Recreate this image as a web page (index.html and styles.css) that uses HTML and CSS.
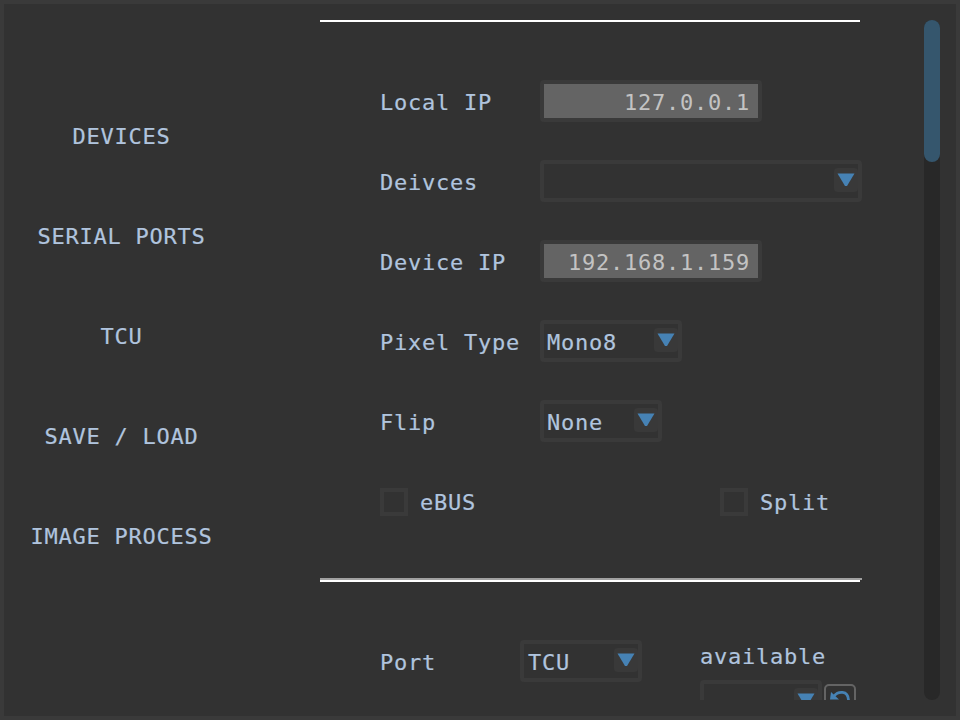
FILE: index.html
```
<!DOCTYPE html>
<html lang="en">
<head>
<meta charset="utf-8">
<title>Preferences</title>
<link rel="stylesheet" href="styles.css">
</head>
<body>
<div class="window">
  <nav class="sidebar">
    <a>DEVICES</a>
    <a>SERIAL PORTS</a>
    <a>TCU</a>
    <a>SAVE / LOAD</a>
    <a>IMAGE PROCESS</a>
  </nav>
  <main class="content">
    <section class="devices">
      <div class="row"><label>Local IP</label><div class="field">127.0.0.1</div></div>
      <div class="row"><label>Deivces</label><div class="select wide"><span></span><i class="arrow"><svg viewBox="0 0 24 24"><path d="M3.5 5.5H20.5L13 18H11Z"/></svg></i></div></div>
      <div class="row"><label>Device IP</label><div class="field">192.168.1.159</div></div>
      <div class="row"><label>Pixel Type</label><div class="select medium"><span>Mono8</span><i class="arrow"><svg viewBox="0 0 24 24"><path d="M3.5 5.5H20.5L13 18H11Z"/></svg></i></div></div>
      <div class="row"><label>Flip</label><div class="select small"><span>None</span><i class="arrow"><svg viewBox="0 0 24 24"><path d="M3.5 5.5H20.5L13 18H11Z"/></svg></i></div></div>
      <div class="checks">
        <div class="check"><i class="box"></i><span>eBUS</span></div>
        <div class="check"><i class="box"></i><span>Split</span></div>
      </div>
    </section>
    <div class="divider"></div>
    <section class="ports">
      <div class="port"><label>Port</label><div class="select small port-select"><span>TCU</span><i class="arrow"><svg viewBox="0 0 24 24"><path d="M3.5 5.5H20.5L13 18H11Z"/></svg></i></div></div>
      <div class="available">
        <label>available</label>
        <div class="pick">
          <div class="select small"><span></span><i class="arrow"><svg viewBox="0 0 24 24"><path d="M3.5 5.5H20.5L13 18H11Z"/></svg></i></div>
          <div class="refresh"><svg viewBox="0 0 28 28"><path class="arc" d="M8 10C12 5 22 4 22.5 14C22.5 19 19 21 14 21"/><path class="head" d="M5 6L13 13.5H4Z"/></svg></div>
        </div>
      </div>
    </section>
  </main>
  <div class="scrollbar"><div class="thumb"></div></div>
</div>
</body>
</html>
```
FILE: styles.css
```
* { box-sizing: border-box; }
body {
  margin: 0;
  background: #3a3a3a;
  color: #b0c4de;
  font: 22px/26px "DejaVu Sans Mono", monospace;
  letter-spacing: 0.755px;
}
svg { display: block; width: 100%; height: 100%; }
label, span, .sidebar a { -webkit-text-stroke: 0.2px; }
.window {
  display: flex;
  width: 960px;
  height: 720px;
  padding: 16px;
  border: 4px solid #3a3a3a;
  background: #323232;
  overflow: hidden;
}
.sidebar {
  display: flex;
  flex-direction: column;
  flex: none;
  width: 203px;
  margin-right: 97px;
  padding-top: 67px;
}
.sidebar a {
  height: 100px;
  line-height: 100px;
  text-align: center;
  white-space: nowrap;
}
.content {
  flex: none;
  width: 542px;
  height: 680px;
  overflow: hidden;
}
.devices {
  height: 558px;
  padding: 60px 0 0 60px;
  background: linear-gradient(#fff, #fff) 0 0 / 540px 2px no-repeat;
}
.row { display: flex; height: 80px; }
.row label { width: 160px; line-height: 46px; white-space: nowrap; }
.field, .select {
  height: 42px;
  border: 4px solid #3a3a3a;
  border-radius: 4px;
  line-height: 38px;
}
.field {
  width: 222px;
  padding-right: 8px;
  background: #646464;
  color: #c3c3c3;
  text-align: right;
}
.select { display: flex; justify-content: space-between; padding-left: 3px; }
.port-select { padding-left: 4px; }
.wide { width: 322px; }
.medium { width: 142px; }
.small { width: 122px; }
.arrow {
  width: 24px;
  height: 24px;
  margin-top: 4px;
  border-radius: 4px;
  background: #393939;
  fill: #4682b4;
}
.checks { display: flex; padding-top: 8px; }
.check { display: flex; gap: 12px; width: 340px; line-height: 30px; }
.check:last-child { width: auto; }
.box { width: 28px; height: 28px; border: 4px solid #3a3a3a; }
.divider {
  height: 4px;
  border-top: 2px solid #a0a0a0;
  background: linear-gradient(#fff, #fff) 0 0 / 540px 2px no-repeat;
}
.ports { display: flex; padding: 58px 0 0 60px; }
.port { display: flex; width: 320px; }
.port label { width: 140px; line-height: 46px; }
.available label { display: block; height: 40px; line-height: 34px; }
.pick { display: flex; gap: 2px; }
.refresh {
  width: 32px;
  height: 32px;
  margin-top: 4px;
  border: 2px solid #646464;
  border-radius: 5px;
}
.refresh .arc { fill: none; stroke: #4682b4; stroke-width: 2.8; }
.refresh .head { fill: #4682b4; }
.scrollbar {
  width: 16px;
  height: 680px;
  margin-left: 62px;
  border-radius: 8px;
  background: #282828;
}
.thumb { height: 142px; border-radius: 8px; background: #35566d; }
```
